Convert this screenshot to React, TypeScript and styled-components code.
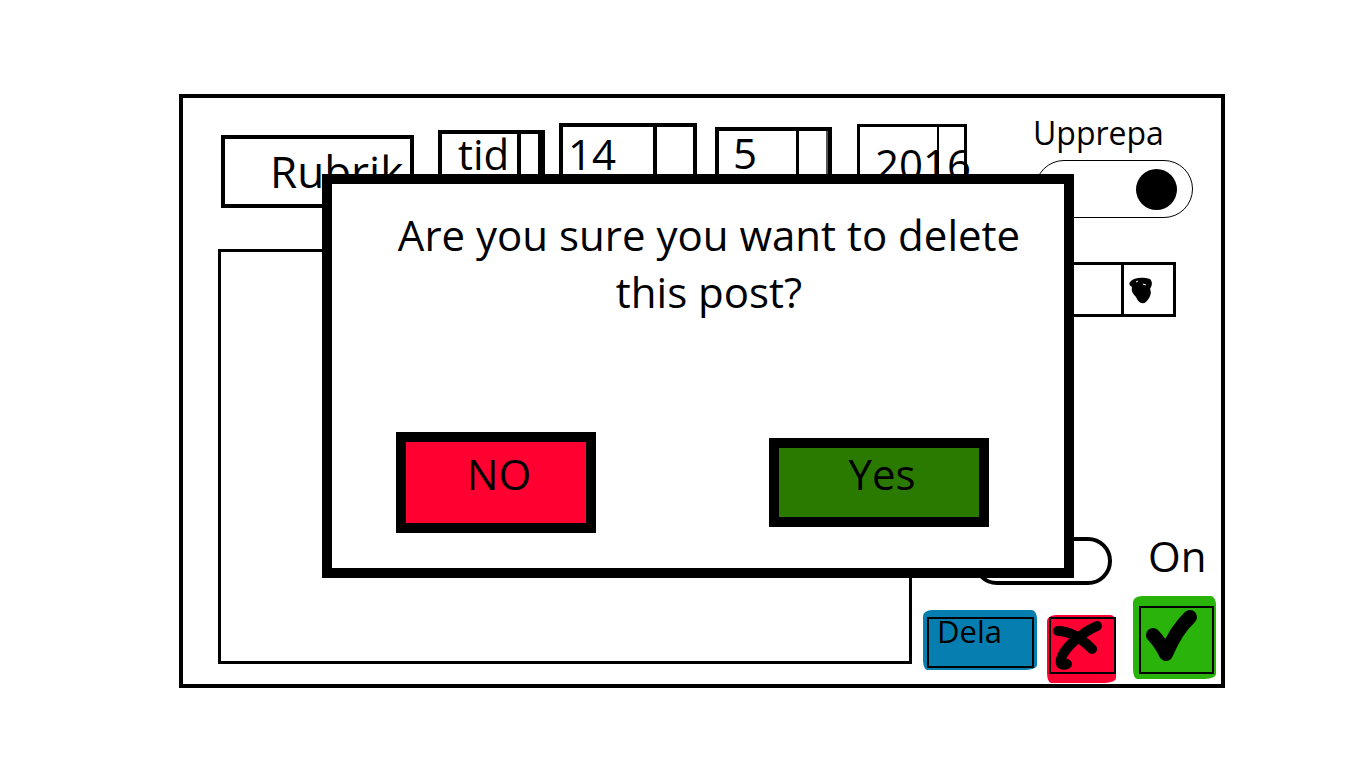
import React from "react";
import styled, { createGlobalStyle } from "styled-components";

const Global = createGlobalStyle`
  html, body { margin: 0; padding: 0; background: #fff; }
  body { font-family: "Open Sans", "Noto Sans", sans-serif; color: #000; }
  * { box-sizing: border-box; }
`;

const Frame = styled.div`
  position: relative;
  margin: 94px 0 0 179px;
  width: 1046px;
  height: 594px;
  border: 4px solid #000;
  background: #fff;
`;

const TopRow = styled.div`
  display: flex;
  align-items: flex-start;
  height: 151px;
`;

const TitleBox = styled.div`
  flex: none;
  margin: 37px 0 0 38px;
  width: 193px;
  height: 73px;
  border: 4px solid #000;
  padding: 12px 0 0 45px;
  font-size: 44px;
  line-height: 40px;
  white-space: nowrap;
`;

const Field = styled.div<{ $ml: number; $mt: number; $bw: number; $brw: number; $h: number }>`
  flex: none;
  display: flex;
  margin: ${(p) => p.$mt}px 0 0 ${(p) => p.$ml}px;
  height: ${(p) => p.$h}px;
  border: ${(p) => p.$bw}px solid #000;
  border-right-width: ${(p) => p.$brw}px;
`;

const FieldValue = styled.div<{ $w: number; $pt: number; $pl: number }>`
  width: ${(p) => p.$w}px;
  padding: ${(p) => p.$pt}px 0 0 ${(p) => p.$pl}px;
  font-size: 42px;
  line-height: 40px;
  white-space: nowrap;
`;

const FieldSpin = styled.div<{ $w: number; $dw: number; $edge?: boolean }>`
  width: ${(p) => p.$w}px;
  border-left: ${(p) => p.$dw}px solid #000;
  border-right: ${(p) => (p.$edge ? "2px solid #555" : "none")};
`;

const RepeatGroup = styled.div`
  flex: none;
  display: flex;
  flex-direction: column;
  margin: 20px 0 0 66px;
`;

const RepeatLabel = styled.div`
  font-size: 32px;
  line-height: 30px;
  white-space: nowrap;
`;

const RepeatToggle = styled.div`
  margin: 12px 0 0 2px;
  width: 158px;
  height: 58px;
  border: 1.5px solid #000;
  border-radius: 29px;
  display: flex;
  align-items: center;
  justify-content: flex-end;
  padding-right: 15px;
`;

const Knob = styled.div`
  width: 41px;
  height: 41px;
  border-radius: 50%;
  background: #000;
`;

const Body = styled.div`
  display: flex;
  height: 435px;
`;

const TextArea = styled.div`
  flex: none;
  margin-left: 35px;
  width: 694px;
  height: 415px;
  border: 3px solid #000;
`;

const SideColumn = styled.div`
  flex: 1;
  display: flex;
  flex-direction: column;
`;

const PickField = styled.div`
  margin: 13px 0 0 48px;
  width: 216px;
  height: 55px;
  border: 3px solid #000;
  display: flex;
  justify-content: flex-end;
`;

const PickButton = styled.div`
  width: 52px;
  border-left: 3px solid #000;
  padding: 11px 0 0 4px;
`;

const ToggleRow = styled.div`
  display: flex;
  align-items: flex-start;
  margin-top: 220px;
`;

const SwitchTrack = styled.div`
  margin-left: 61px;
  width: 139px;
  height: 48px;
  border: 4px solid #000;
  border-radius: 24px;
`;

const OnLabel = styled.div`
  margin: -5px 0 0 36px;
  font-size: 42px;
  line-height: 48px;
`;

const ActionRow = styled.div`
  display: flex;
  align-items: flex-start;
  margin: 11px 0 0 11px;
`;

const ActionPaint = styled.div<{ $bg: string; $pad: string; $ml: number; $mt: number }>`
  flex: none;
  margin: ${(p) => p.$mt}px 0 0 ${(p) => p.$ml}px;
  padding: ${(p) => p.$pad};
  background: ${(p) => p.$bg};
  border-radius: 9px 5px 11px 4px / 6px 9px 5px 10px;
`;

const ActionFace = styled.div<{ $w: number; $h: number }>`
  width: ${(p) => p.$w}px;
  height: ${(p) => p.$h}px;
  border: 2px solid #000;
  display: flex;
`;

const ShareText = styled.span`
  padding-left: 8px;
  font-size: 31px;
  line-height: 24px;
`;

const Dialog = styled.div`
  position: absolute;
  left: 139px;
  top: 76px;
  z-index: 2;
  width: 752px;
  height: 404px;
  border: 10px solid #000;
  background: #fff;
  display: flex;
  flex-direction: column;
`;

const DialogText = styled.p`
  margin: 0;
  padding: 22px 25px 0 47px;
  text-align: center;
  font-size: 42px;
  line-height: 57px;
`;

const DialogActions = styled.div`
  display: flex;
  align-items: center;
  gap: 173px;
  margin: 112px 0 0 64px;
`;

const DialogButton = styled.div<{ $w: number; $h: number; $bg: string }>`
  width: ${(p) => p.$w}px;
  height: ${(p) => p.$h}px;
  border: 10px solid #000;
  background: ${(p) => p.$bg};
  display: flex;
  align-items: center;
  justify-content: center;
  padding: 0 0 17px 6px;
  font-size: 42px;
  line-height: 40px;
`;

export default function App() {
  return (
    <>
      <Global />
      <Frame>
        <TopRow>
          <TitleBox>Rubrik</TitleBox>
          <Field $ml={24} $mt={32} $bw={4} $brw={7} $h={60}>
            <FieldValue $w={75} $pt={0} $pl={16}>tid</FieldValue>
            <FieldSpin $w={21} $dw={4} />
          </Field>
          <Field $ml={14} $mt={25} $bw={4} $brw={4} $h={67}>
            <FieldValue $w={90} $pt={7} $pl={5}>14</FieldValue>
            <FieldSpin $w={40} $dw={4} />
          </Field>
          <Field $ml={18} $mt={29} $bw={4} $brw={4} $h={63}>
            <FieldValue $w={77} $pt={2} $pl={14}>5</FieldValue>
            <FieldSpin $w={32} $dw={3} $edge />
          </Field>
          <Field $ml={25} $mt={26} $bw={3} $brw={3} $h={66}>
            <FieldValue $w={77} $pt={17} $pl={15}>2016</FieldValue>
            <FieldSpin $w={27} $dw={2} />
          </Field>
          <RepeatGroup>
            <RepeatLabel>Upprepa</RepeatLabel>
            <RepeatToggle>
              <Knob />
            </RepeatToggle>
          </RepeatGroup>
        </TopRow>
        <Body>
          <TextArea />
          <SideColumn>
            <PickField>
              <PickButton>
                <svg width="26" height="29" viewBox="0 0 26 29">
                  <path
                    d="M2 6 C6 1 15 1 22 3 C25 6 24 10 22 13 C24 17 22 22 18 26 C14 29 10 26 8 21 C5 18 3 15 4 11 C1 9 1 8 2 6 Z"
                    fill="#000"
                  />
                  <path d="M15 8 L18 9 M8 6 L10 5" stroke="#fff" strokeWidth="1" />
                </svg>
              </PickButton>
            </PickField>
            <ToggleRow>
              <SwitchTrack />
              <OnLabel>On</OnLabel>
            </ToggleRow>
            <ActionRow>
              <ActionPaint $bg="#067fb0" $pad="7px 3px 2px 4px" $ml={0} $mt={14}>
                <ActionFace $w={107} $h={51}>
                  <ShareText>Dela</ShareText>
                </ActionFace>
              </ActionPaint>
              <ActionPaint $bg="#ff0033" $pad="2px 0 9px 2px" $ml={10} $mt={19}>
                <ActionFace $w={67} $h={57}>
                  <svg width="63" height="53" viewBox="0 0 63 53">
                    <path
                      d="M7 12 Q23 12 41 30"
                      fill="none"
                      stroke="#000"
                      strokeWidth="10"
                      strokeLinecap="round"
                    />
                    <path
                      d="M46 7 C30 14 13 29 10 40 Q8 48 16 45"
                      fill="none"
                      stroke="#000"
                      strokeWidth="10"
                      strokeLinecap="round"
                    />
                  </svg>
                </ActionFace>
              </ActionPaint>
              <ActionPaint $bg="#2ab30b" $pad="10px 2px 5px 6px" $ml={17} $mt={0}>
                <ActionFace $w={75} $h={68}>
                  <svg width="71" height="64" viewBox="0 0 71 64">
                    <path
                      d="M12 27 Q19 34 25 46 Q35 22 49 9"
                      fill="none"
                      stroke="#000"
                      strokeWidth="14"
                      strokeLinecap="round"
                      strokeLinejoin="round"
                    />
                  </svg>
                </ActionFace>
              </ActionPaint>
            </ActionRow>
          </SideColumn>
        </Body>
        <Dialog>
          <DialogText>Are you sure you want to delete this post?</DialogText>
          <DialogActions>
            <DialogButton $w={200} $h={101} $bg="#ff0030">NO</DialogButton>
            <DialogButton $w={220} $h={89} $bg="#2a7a00">Yes</DialogButton>
          </DialogActions>
        </Dialog>
      </Frame>
    </>
  );
}
